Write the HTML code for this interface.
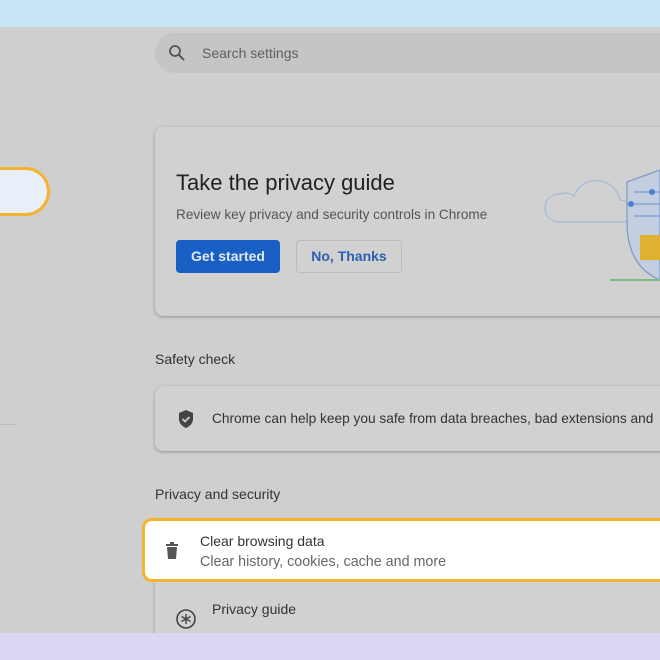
<!DOCTYPE html>
<html><head><style>
*{margin:0;padding:0;box-sizing:border-box}
body{width:660px;height:660px;overflow:hidden;background:#cfcfcf;font-family:"Liberation Sans",sans-serif;position:relative}
.a{position:absolute}
</style></head><body>
<div class="a" style="left:0;top:0;width:660px;height:27px;background:#c8e4f5"></div>
<div class="a" style="left:155px;top:33px;width:540px;height:40px;border-radius:20px;background:#c5c5c5"></div>
<svg class="a" style="left:168px;top:44px" width="18" height="18" viewBox="0 0 18 18"><circle cx="7" cy="7" r="5" fill="none" stroke="#555" stroke-width="1.8"/><path d="M11 11l5 5" stroke="#555" stroke-width="2"/></svg>
<div class="a" style="left:202px;top:45px;font-size:14px;color:#5f5f5f">Search settings</div>
<div class="a" style="left:-30px;top:167px;width:80px;height:49px;border-radius:25px;background:#e8eefa;border:3px solid #f4b42e"></div>
<div class="a" style="left:0;top:424px;width:16px;height:1px;background:#bdbdbd"></div>
<div class="a" style="left:155px;top:127px;width:540px;height:189px;border-radius:8px;background:#d1d1d1;box-shadow:0 1px 3px rgba(0,0,0,.3)"></div>
<div class="a" style="left:176px;top:170px;font-size:22px;color:#222">Take the privacy guide</div>
<div class="a" style="left:176px;top:207px;font-size:13.6px;color:#555">Review key privacy and security controls in Chrome</div>
<div class="a" style="left:176px;top:240px;width:104px;height:33px;border-radius:4px;background:#1a5fc4;color:#dfe8f7;font-size:14px;font-weight:bold;text-align:center;line-height:33px">Get started</div>
<div class="a" style="left:296px;top:240px;width:106px;height:33px;border-radius:4px;border:1px solid #bbb;color:#2d5fb2;font-size:14px;font-weight:bold;text-align:center;line-height:31px">No, Thanks</div>
<svg class="a" style="left:540px;top:150px" width="120" height="150" viewBox="0 0 120 150">
<path d="M18 72a14 14 0 0 1 2-28a14 14 0 0 1 14 2a24 24 0 0 1 46 4a12 12 0 0 1 6 22z" fill="none" stroke="#a8bdd8" stroke-width="1.3"/>
<path d="M87 32l33-12v110q-33-14-33-58z" fill="#c3cfe0" stroke="#7f9cc8" stroke-width="1.3"/>
<path d="M94 42h26M90 54h30M94 66h26" stroke="#6a8ed0"/><circle cx="112" cy="42" r="3" fill="#4f7fd6"/><circle cx="91" cy="54" r="3" fill="#4f7fd6"/>
<rect x="100" y="85" width="20" height="25" fill="#e0b030"/>
<path d="M70 130h50" stroke="#7fb98a" stroke-width="2"/>
</svg>
<div class="a" style="left:155px;top:351px;font-size:14px;color:#333">Safety check</div>
<div class="a" style="left:155px;top:386px;width:540px;height:65px;border-radius:8px;background:#d1d1d1;box-shadow:0 1px 3px rgba(0,0,0,.3)"></div>
<svg class="a" style="left:177px;top:409px" width="18" height="20" viewBox="0 0 18 20"><path d="M9 1l7 3v6c0 4-3 7.5-7 9c-4-1.5-7-5-7-9V4z" fill="#444"/><path d="M5.5 10l2.5 2.5 4.5-4.5" stroke="#ccc" stroke-width="1.8" fill="none"/></svg>
<div class="a" style="left:212px;top:411px;font-size:13.7px;color:#333;white-space:nowrap">Chrome can help keep you safe from data breaches, bad extensions and</div>
<div class="a" style="left:155px;top:486px;font-size:14px;color:#333">Privacy and security</div>
<div class="a" style="left:155px;top:580px;width:540px;height:70px;background:#d1d1d1;box-shadow:0 1px 3px rgba(0,0,0,.3)"></div>
<div class="a" style="left:142px;top:518px;width:540px;height:64px;border-radius:10px;background:#fff;border:3px solid #f4b42e"></div>
<svg class="a" style="left:165px;top:542px" width="14" height="18" viewBox="0 0 14 18"><rect x="1" y="2" width="12" height="2" fill="#555"/><rect x="5" y="0" width="4" height="2" fill="#555"/><path d="M2 5h10l-1 12H3z" fill="#555"/></svg>
<div class="a" style="left:200px;top:533px;font-size:14px;color:#333">Clear browsing data</div>
<div class="a" style="left:200px;top:554px;font-size:14.3px;color:#666">Clear history, cookies, cache and more</div>
<svg class="a" style="left:175px;top:608px" width="22" height="22" viewBox="0 0 22 22"><circle cx="11" cy="11" r="9" fill="none" stroke="#444" stroke-width="1.6"/><path d="M11 6v10M6.5 8.5l9 5M6.5 13.5l9-5" stroke="#444" stroke-width="1.4"/></svg>
<div class="a" style="left:212px;top:601px;font-size:14px;color:#333">Privacy guide</div>
<div class="a" style="left:0;top:633px;width:660px;height:27px;background:#dcd6f5"></div>
</body></html>
